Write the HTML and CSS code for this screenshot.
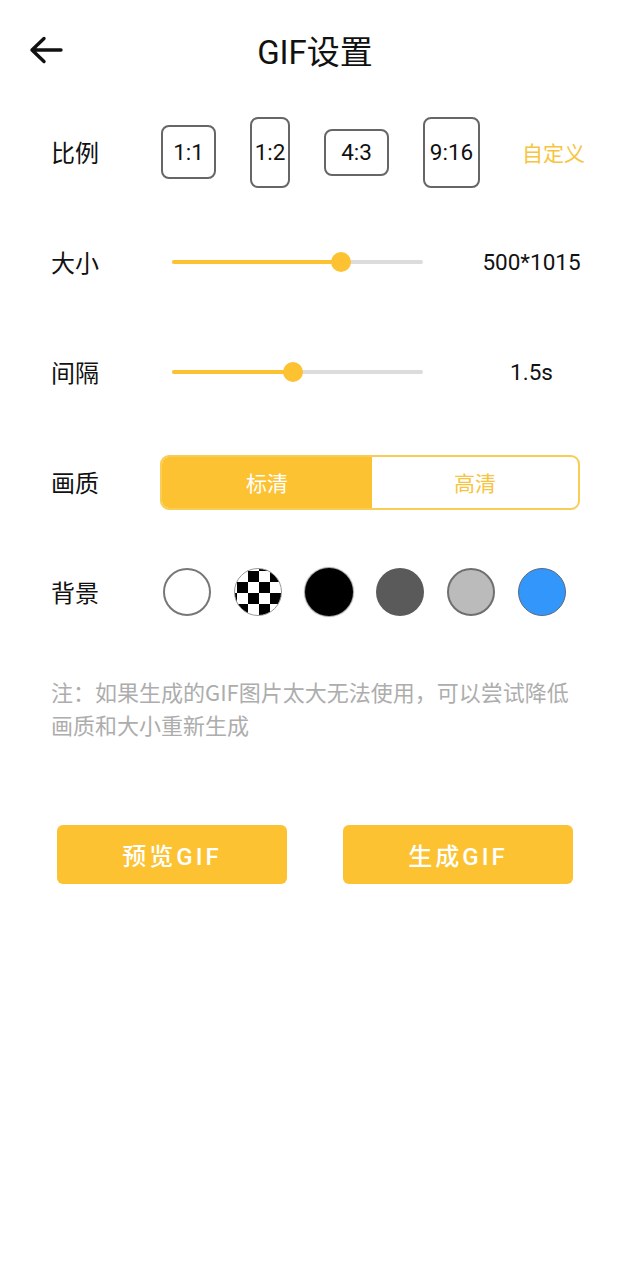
FILE: index.html
```html
<!DOCTYPE html>
<html lang="zh-CN">
<head>
<meta charset="utf-8">
<title>GIF设置</title>
<link rel="stylesheet" href="styles.css">
</head>
<body>
<div class="page">
  <header class="header">
    <svg class="back" width="34" height="28" viewBox="0 0 34 28">
      <path d="M3 14 H32 M15 2.5 L3 14 L15 25.5" fill="none" stroke="#111" stroke-width="3.4" stroke-linecap="round" stroke-linejoin="round"/>
    </svg>
    <h1 class="title">GIF设置</h1>
  </header>

  <div class="row">
    <div class="label">比例</div>
    <div class="ratios">
      <div class="ratio r11">1:1</div>
      <div class="ratio r12">1:2</div>
      <div class="ratio r43">4:3</div>
      <div class="ratio r916">9:16</div>
      <div class="custom">自定义</div>
    </div>
  </div>

  <div class="row">
    <div class="label">大小</div>
    <div class="slider">
      <div class="track">
        <div class="fill" style="width:169px"></div>
        <div class="thumb" style="left:169px"></div>
      </div>
    </div>
    <div class="value">500*1015</div>
  </div>

  <div class="row">
    <div class="label">间隔</div>
    <div class="slider">
      <div class="track">
        <div class="fill" style="width:121px"></div>
        <div class="thumb" style="left:121px"></div>
      </div>
    </div>
    <div class="value">1.5s</div>
  </div>

  <div class="row">
    <div class="label">画质</div>
    <div class="segment">
      <div class="seg active">标清</div>
      <div class="seg">高清</div>
    </div>
  </div>

  <div class="row">
    <div class="label">背景</div>
    <div class="swatches">
      <div class="swatch white"></div>
      <div class="swatch checker"></div>
      <div class="swatch black"></div>
      <div class="swatch dark"></div>
      <div class="swatch light"></div>
      <div class="swatch blue"></div>
    </div>
  </div>

  <p class="note">注：如果生成的GIF图片太大无法使用，可以尝试降低<br>画质和大小重新生成</p>

  <div class="actions">
    <div class="btn">预览GIF</div>
    <div class="btn">生成GIF</div>
  </div>
</div>
</body>
</html>
```

FILE: styles.css
```css
* { box-sizing: border-box; }
html, body {
  margin: 0;
  padding: 0;
  background: #fff;
}
body {
  font-family: Roboto, "Noto Sans CJK SC", "Noto Sans", sans-serif;
  color: #111;
}
.page {
  width: 630px;
  min-height: 1280px;
}
.header {
  position: relative;
  height: 97px;
  display: flex;
  align-items: center;
  justify-content: center;
}
.back {
  position: absolute;
  left: 29px;
  top: 36px;
}
.title {
  margin: 0;
  font-size: 33px;
  font-weight: 400;
  line-height: 1;
  margin-top: 7px;
}
.row {
  height: 110px;
  display: flex;
  align-items: center;
  padding-left: 51px;
}
.label {
  width: 109px;
  flex: none;
  font-size: 24px;
  font-family: "Noto Sans CJK SC", sans-serif;
  line-height: 1;
}
.ratios {
  display: flex;
  align-items: center;
  gap: 34px;
}
.ratio {
  border: 2px solid #666;
  border-radius: 8px;
  display: flex;
  align-items: center;
  justify-content: center;
  font-size: 22.5px;
  color: #111;
}
.r11 { width: 55px; height: 54px; margin-left: 1px; }
.r12 { width: 40px; height: 71px; }
.r43 { width: 65px; height: 47px; }
.r916 { width: 57px; height: 71px; }
.custom {
  margin-left: 8px;
  font-size: 21px;
  color: #f7c440;
  font-family: "Noto Sans CJK SC", sans-serif;
}
.slider {
  width: 296px;
  flex: none;
  padding-left: 12px;
}
.track {
  position: relative;
  width: 251px;
  height: 4px;
  background: #dcdcdc;
  border-radius: 2px;
}
.fill {
  height: 4px;
  background: #fcc232;
  border-radius: 2px;
}
.thumb {
  position: absolute;
  top: 50%;
  width: 20px;
  height: 20px;
  margin-left: -10px;
  margin-top: -10px;
  border-radius: 50%;
  background: #fcc232;
}
.value {
  width: 151px;
  text-align: center;
  font-size: 22.5px;
  color: #111;
}
.segment {
  display: flex;
  width: 420px;
  height: 55px;
  border: 2px solid #f8cd55;
  border-radius: 9px;
  overflow: hidden;
}
.seg {
  flex: 1;
  display: flex;
  align-items: center;
  justify-content: center;
  font-family: "Noto Sans CJK SC", sans-serif;
  font-size: 21px;
  color: #f7c440;
}
.seg.active {
  background: #fcc232;
  color: #fff;
  flex: none;
  width: 210px;
}
.swatches {
  display: flex;
  gap: 23px;
  margin-left: 3px;
}
.swatch {
  width: 48px;
  height: 48px;
  border-radius: 50%;
}
.white { background: #fff; border: 2px solid #777; }
.checker {
  border: 1px solid #999;
  background-color: #fff;
  background-image: conic-gradient(#000 25%, #fff 0 50%, #000 0 75%, #fff 0);
  background-size: 22px 22px;
  background-position: 2px 2px;
}
.black { background: #000; box-shadow: 0 0 1px 1px rgba(0,0,0,0.4); }
.dark { background: #5a5a5a; }
.light { background: #bbbbbb; border: 2px solid #6f6f6f; }
.blue { background: #3396fb; border: 1.5px solid #5a6a80; }
.note {
  margin: 28px 30px 0 51px;
  font-family: "Noto Sans CJK SC", sans-serif;
  font-size: 22px;
  line-height: 33px;
  color: #adadad;
}
.actions {
  display: flex;
  gap: 56px;
  padding-left: 57px;
  margin-top: 84px;
}
.btn {
  width: 230px;
  height: 59px;
  border-radius: 6px;
  background: #fcc232;
  color: #fff;
  display: flex;
  align-items: center;
  justify-content: center;
  font-size: 24px;
  font-weight: 500;
  letter-spacing: 3px;
}
```
